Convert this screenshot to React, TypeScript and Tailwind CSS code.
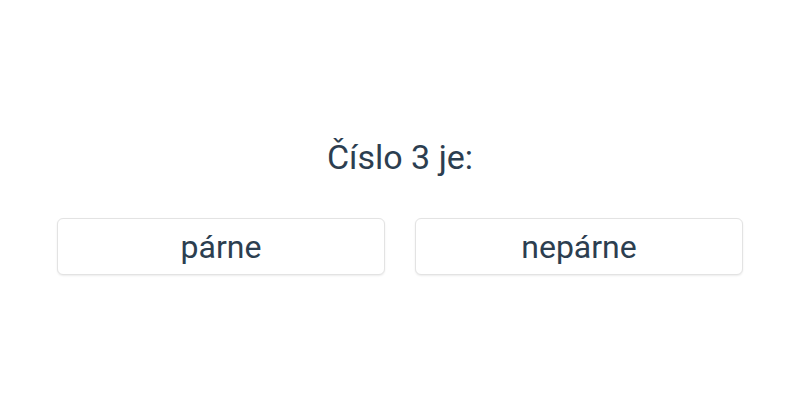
export default function App() {
  return (
    <main className="min-h-[400px] w-[800px] bg-white text-[#2c3e50] font-['Roboto',sans-serif]">
      <div className="flex flex-col items-center pt-[134px]">
        <h1 className="text-[34px] leading-[46px] font-normal">Číslo 3 je:</h1>
        <div className="mt-[38px] grid grid-cols-2 gap-[30px] w-full px-[57px]">
          <button className="h-[57px] rounded-md border border-[#e3e3e3] bg-white shadow-[0_1px_2px_rgba(0,0,0,0.08)] text-[32px]">
            párne
          </button>
          <button className="h-[57px] rounded-md border border-[#e3e3e3] bg-white shadow-[0_1px_2px_rgba(0,0,0,0.08)] text-[32px]">
            nepárne
          </button>
        </div>
      </div>
    </main>
  )
}
